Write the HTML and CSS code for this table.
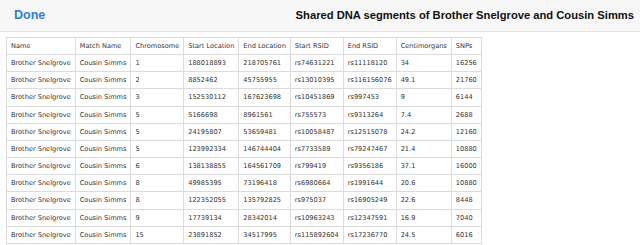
FILE: index.html
```html
<!DOCTYPE html>
<html>
<head>
<meta charset="utf-8">
<link rel="stylesheet" href="styles.css">
</head>
<body>
<div class="nav">
  <span class="done">Done</span>
  <span class="title">Shared DNA segments of Brother Snelgrove and Cousin Simms</span>
</div>
<div class="content">
<table class="seg">
  <tr><td>Name</td><td>Match Name</td><td>Chromosome</td><td>Start Location</td><td>End Location</td><td>Start RSID</td><td>End RSID</td><td>Centimorgans</td><td>SNPs</td></tr>
  <tr><td>Brother Snelgrove</td><td>Cousin Simms</td><td>1</td><td>188018893</td><td>218705761</td><td>rs74631221</td><td>rs11118120</td><td>34</td><td>16256</td></tr>
  <tr><td>Brother Snelgrove</td><td>Cousin Simms</td><td>2</td><td>8852462</td><td>45755955</td><td>rs13010395</td><td>rs116156076</td><td>49.1</td><td>21760</td></tr>
  <tr><td>Brother Snelgrove</td><td>Cousin Simms</td><td>3</td><td>152530112</td><td>167623698</td><td>rs10451869</td><td>rs997453</td><td>9</td><td>6144</td></tr>
  <tr><td>Brother Snelgrove</td><td>Cousin Simms</td><td>5</td><td>5166698</td><td>8961561</td><td>rs755573</td><td>rs9313264</td><td>7.4</td><td>2688</td></tr>
  <tr><td>Brother Snelgrove</td><td>Cousin Simms</td><td>5</td><td>24195807</td><td>53659481</td><td>rs10058487</td><td>rs12515078</td><td>24.2</td><td>12160</td></tr>
  <tr><td>Brother Snelgrove</td><td>Cousin Simms</td><td>5</td><td>123992334</td><td>146744404</td><td>rs7733589</td><td>rs79247467</td><td>21.4</td><td>10880</td></tr>
  <tr><td>Brother Snelgrove</td><td>Cousin Simms</td><td>6</td><td>138138855</td><td>164561709</td><td>rs799419</td><td>rs9356186</td><td>37.1</td><td>16000</td></tr>
  <tr><td>Brother Snelgrove</td><td>Cousin Simms</td><td>8</td><td>49985395</td><td>73196418</td><td>rs6980664</td><td>rs1991644</td><td>20.6</td><td>10880</td></tr>
  <tr><td>Brother Snelgrove</td><td>Cousin Simms</td><td>8</td><td>122352055</td><td>135792825</td><td>rs975037</td><td>rs16905249</td><td>22.6</td><td>8448</td></tr>
  <tr><td>Brother Snelgrove</td><td>Cousin Simms</td><td>9</td><td>17739134</td><td>28342014</td><td>rs10963243</td><td>rs12347591</td><td>16.9</td><td>7040</td></tr>
  <tr><td>Brother Snelgrove</td><td>Cousin Simms</td><td>15</td><td>23891852</td><td>34517995</td><td>rs115892604</td><td>rs17236770</td><td>24.5</td><td>6016</td></tr>
</table>
</div>
</body>
</html>
```
FILE: styles.css
```css
html, body {
  margin: 0;
  padding: 0;
  background: #ffffff;
}
.nav {
  height: 32px;
  box-sizing: border-box;
  background: #f7f7f7;
  border-bottom: 1px solid #e2e2e2;
  display: flex;
  align-items: center;
  justify-content: space-between;
  padding: 0 6px 2px 14px;
  font-family: "Liberation Sans", Arial, sans-serif;
}
.done {
  color: #2f7fd9;
  font-size: 12.5px;
  font-weight: bold;
}
.title {
  color: #111;
  font-size: 11.2px;
  font-weight: bold;
}
.content {
  padding: 5px 6px;
}
.seg {
  border-collapse: collapse;
  font-family: "DejaVu Sans", Verdana, sans-serif;
  font-size: 6.6px;
  color: #333;
}
.seg td {
  border: 1px solid #dcdcdc;
  padding: 4px;
  line-height: 8.15px;
  color: #333;
  white-space: nowrap;
  text-align: left;
}
```
